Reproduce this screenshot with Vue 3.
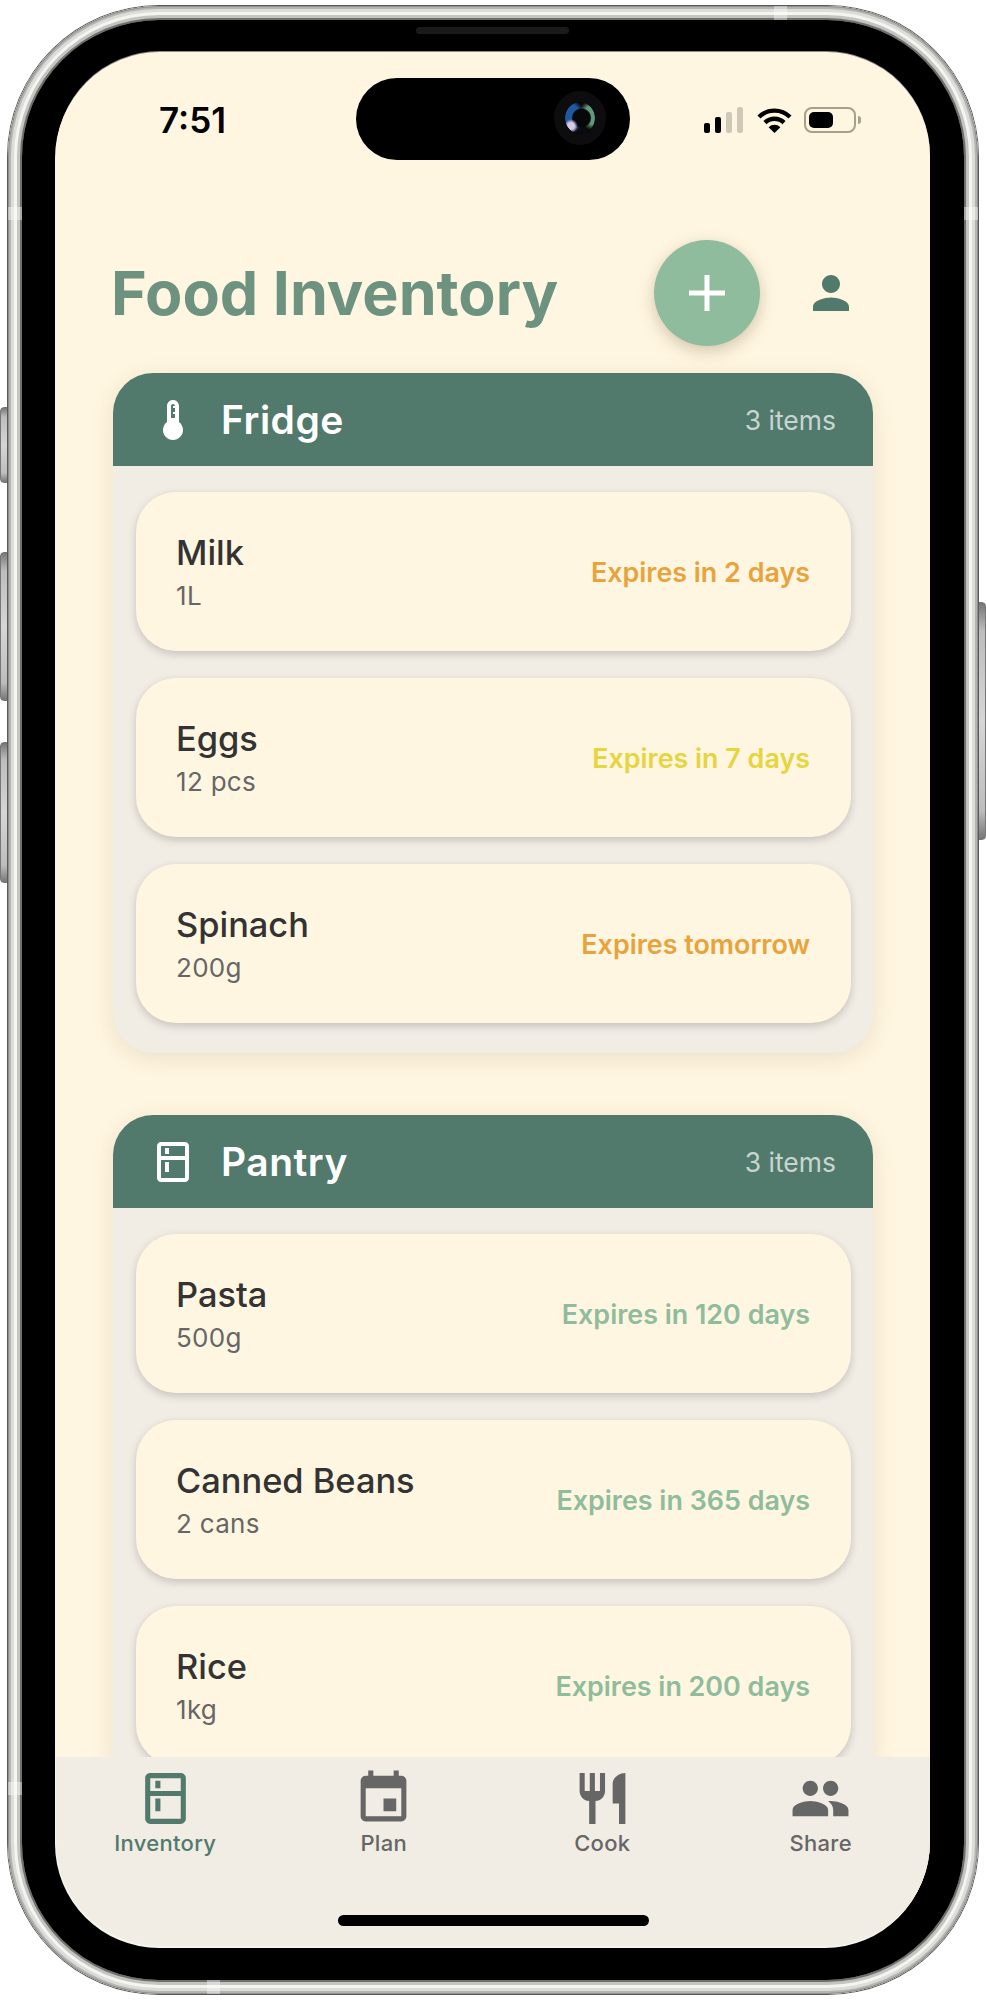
<script setup>
const sections = [
  {
    name: 'Fridge',
    icon: 'thermo',
    items: [
      { name: 'Milk', qty: '1L', expiry: 'Expires in 2 days', level: 'soon' },
      { name: 'Eggs', qty: '12 pcs', expiry: 'Expires in 7 days', level: 'mid' },
      { name: 'Spinach', qty: '200g', expiry: 'Expires tomorrow', level: 'soon' },
    ],
  },
  {
    name: 'Pantry',
    icon: 'kitchen',
    items: [
      { name: 'Pasta', qty: '500g', expiry: 'Expires in 120 days', level: 'ok' },
      { name: 'Canned Beans', qty: '2 cans', expiry: 'Expires in 365 days', level: 'ok' },
      { name: 'Rice', qty: '1kg', expiry: 'Expires in 200 days', level: 'ok' },
    ],
  },
]

const kitchen = 'M18 2.01L6 2c-1.1 0-2 .89-2 2v16c0 1.1.9 2 2 2h12c1.1 0 2-.9 2-2V4c0-1.11-.9-1.99-2-1.99zM18 20H6v-9.02h12V20zm0-11H6V4h12v5zM8 5h2v3H8zm0 7h2v5H8z'
const thermo = 'M15 13V5c0-1.66-1.34-3-3-3S9 3.34 9 5v8c-1.21.91-2 2.37-2 4 0 2.76 2.24 5 5 5s5-2.24 5-5c0-1.63-.79-3.09-2-4zm-4-8c0-.55.45-1 1-1s1 .45 1 1h-1v1h1v2h-1v1h1v2h-2V5z'

const tabs = [
  { label: 'Inventory', active: true, d: kitchen },
  { label: 'Plan', d: 'M17 12h-5v5h5v-5zM16 1v2H8V1H6v2H5c-1.11 0-1.99.9-1.99 2L3 19c0 1.1.89 2 2 2h14c1.1 0 2-.9 2-2V5c0-1.1-.9-2-2-2h-1V1h-2zm3 18H5V8h14v11z' },
  { label: 'Cook', d: 'M11 9H9V2H7v7H5V2H3v7c0 2.12 1.66 3.84 3.75 3.97V22h2.5v-9.03C11.34 12.84 13 11.12 13 9V2h-2v7zm5-3v8h2.5v8H21V2c-2.76 0-5 2.24-5 4z' },
  { label: 'Share', d: 'M16 11c1.66 0 2.99-1.34 2.99-3S17.66 5 16 5c-1.66 0-3 1.34-3 3s1.34 3 3 3zm-8 0c1.66 0 2.99-1.34 2.99-3S9.66 5 8 5C6.34 5 5 6.34 5 8s1.34 3 3 3zm0 2c-2.33 0-7 1.17-7 3.5V19h14v-2.5c0-2.33-4.67-3.5-7-3.5zm8 0c-.29 0-.62.02-.97.05 1.16.84 1.97 1.97 1.97 3.45V19h6v-2.5c0-2.33-4.67-3.5-7-3.5z' },
]
</script>

<template>
  <div class="page">
    <i class="side-btn left b1"></i>
    <i class="side-btn left b2"></i>
    <i class="side-btn left b3"></i>
    <i class="side-btn right b4"></i>

    <div class="frame">
      <div class="ring">
        <i class="band h top"></i>
        <i class="band h bottom"></i>
        <i class="band v l1"></i>
        <i class="band v l2"></i>
        <i class="band v r1"></i>
        <div class="bezel">
          <i class="speaker"></i>
          <div class="screen">
            <div class="island"><i class="lens"></i></div>

            <div class="status">
              <span class="time">7:51</span>
              <div class="status-icons">
                <div class="signal"><i></i><i></i><i class="off"></i><i class="off"></i></div>
                <svg class="wifi" width="35" height="26" viewBox="0 0 35 26">
                  <path d="M2 10A22 22 0 0 1 33 10" fill="none" stroke="#000" stroke-width="4.4" />
                  <path d="M8 15.6A13.5 13.5 0 0 1 27 15.6" fill="none" stroke="#000" stroke-width="4.4" />
                  <path d="M17.5 26L11.6 20.2A8.4 8.4 0 0 1 23.4 20.2Z" />
                </svg>
                <div class="battery"><i></i></div>
              </div>
            </div>

            <div class="body">
              <div class="header">
                <h1>Food Inventory</h1>
                <button class="add">
                  <svg width="36" height="36" viewBox="0 0 36 36"><path d="M18 0v36M0 18h36" stroke="#fff" stroke-width="5" /></svg>
                </button>
                <svg class="profile" width="54" height="54" viewBox="0 0 24 24">
                  <path d="M12 12c2.21 0 4-1.79 4-4s-1.79-4-4-4-4 1.79-4 4 1.79 4 4 4zm0 2c-2.67 0-8 1.34-8 4v2h16v-2c0-2.66-5.33-4-8-4z" />
                </svg>
              </div>

              <section v-for="s in sections" :key="s.name" class="section">
                <div class="section-head">
                  <svg class="section-icon" width="54" height="48" viewBox="-1.5 0 27 24">
                    <path :d="s.icon === 'thermo' ? thermo : kitchen" />
                  </svg>
                  <h2>{{ s.name }}</h2>
                  <span class="count">{{ s.items.length }} items</span>
                </div>
                <div class="items">
                  <div v-for="item in s.items" :key="item.name" class="item">
                    <div>
                      <div class="item-name">{{ item.name }}</div>
                      <div class="item-qty">{{ item.qty }}</div>
                    </div>
                    <span class="expiry" :class="item.level">{{ item.expiry }}</span>
                  </div>
                </div>
              </section>
            </div>

            <nav class="tabs">
              <div v-for="t in tabs" :key="t.label" class="tab" :class="{ active: t.active }">
                <svg width="61" height="61" viewBox="0 0 24 24"><path :d="t.d" /></svg>
                <span>{{ t.label }}</span>
              </div>
              <i class="home"></i>
            </nav>
          </div>
        </div>
      </div>
    </div>
  </div>
</template>

<style>
html, body { background: #fff; }
</style>

<style scoped>
.page {
  position: relative;
  width: 986px;
  height: 2000px;
  padding: 5px 7px;
  box-sizing: border-box;
  font-family: Inter, "Liberation Sans", sans-serif;
  overflow: hidden;
}
.side-btn {
  position: absolute;
  width: 10px;
  background: linear-gradient(180deg, #777 0, #bdbdbd 12%, #d6d6d6 50%, #bdbdbd 88%, #777 100%);
  border: 1px solid #77777a;
  box-sizing: border-box;
}
.side-btn.left { left: 0; border-radius: 4px 0 0 4px; }
.side-btn.right { right: 0; border-radius: 0 4px 4px 0; }
.b1 { top: 407px; height: 76px; }
.b2 { top: 552px; height: 149px; }
.b3 { top: 742px; height: 141px; }
.b4 { top: 602px; height: 238px; }

.frame {
  position: relative;
  height: 1990px;
  padding: 1px;
  border-radius: 152px;
  background: #5a5a5a;
  box-sizing: border-box;
}
.ring {
  position: relative;
  height: 100%;
  padding: 14px;
  border-radius: 151px;
  background: #cfcfcb;
  box-shadow: inset 0 0 0 1px #8e8e8b, inset 0 0 0 3px #b4b4b0, inset 0 0 0 6px #dcdcd8, inset 0 0 0 9px #f4f4f1, inset 0 0 0 12px #c4c4c0, inset 0 0 0 14px #6f6f6c;
  box-sizing: border-box;
}
.band {
  position: absolute;
  background: rgba(255, 255, 255, 0.4);
}
.band.h { width: 13px; height: 14px; }
.band.v { width: 14px; height: 13px; }
.band.top { top: 0; left: 766px; }
.band.bottom { bottom: 0; left: 199px; }
.band.l1 { left: 0; top: 201px; }
.band.l2 { left: 0; top: 1776px; }
.band.r1 { right: 0; top: 201px; }

.bezel {
  position: relative;
  height: 100%;
  padding: 32px 34px 34px;
  border-radius: 137px;
  background: #000;
  box-sizing: border-box;
}
.speaker {
  position: absolute;
  top: 7px;
  left: 394px;
  width: 153px;
  height: 7px;
  border-radius: 4px;
  background: #1a1a1a;
}
.screen {
  position: relative;
  display: flex;
  flex-direction: column;
  height: 100%;
  border-radius: 104px;
  background: #fff6e1;
  overflow: hidden;
  box-shadow: -1px 2px 0 #f4f4f0, 0 -1px 0 #8a8a8a;
}
.island {
  position: absolute;
  z-index: 3;
  top: 26px;
  left: 300px;
  width: 274px;
  height: 82px;
  border-radius: 41px;
  background: #000;
}
.lens {
  position: absolute;
  top: 13px;
  left: 198px;
  width: 30px;
  height: 32px;
  border: 11px solid #0d0d0f;
  border-radius: 50%;
  background:
    radial-gradient(circle at 20% 75%, #d8cce0 0 10%, transparent 20%),
    radial-gradient(circle at 55% 50%, #08080a 0 38%, transparent 44%),
    radial-gradient(circle at 6% 45%, #1f5aa0 0 40%, transparent 54%),
    radial-gradient(circle at 96% 40%, #5f9a7c 0 28%, transparent 44%),
    #0b0b0d;
  background-clip: padding-box;
}

.status {
  display: flex;
  justify-content: space-between;
  align-items: center;
  flex: none;
  height: 58px;
  margin-top: 39px;
  padding: 0 69px 0 103px;
}
.time {
  font-size: 35px;
  font-weight: 600;
  color: #000;
}
.status-icons {
  display: flex;
  align-items: flex-end;
  gap: 12px;
}
.signal {
  display: flex;
  align-items: flex-end;
  gap: 5px;
  height: 26px;
  margin-right: 2px;
}
.signal i {
  width: 6px;
  border-radius: 2px;
  background: #000;
}
.signal i:nth-child(1) { height: 10px; }
.signal i:nth-child(2) { height: 16px; }
.signal i:nth-child(3) { height: 21px; }
.signal i:nth-child(4) { height: 26px; }
.signal i.off { background: #cfc8b8; }
.wifi { display: block; }
.battery {
  position: relative;
  width: 52px;
  height: 26px;
  padding: 3px;
  border: 2px solid #a89f8a;
  border-radius: 8px;
  box-sizing: border-box;
  margin-right: 5px;
}
.battery::after {
  content: "";
  position: absolute;
  top: 7px;
  right: -7px;
  width: 3px;
  height: 8px;
  border-radius: 0 3px 3px 0;
  background: #a89f8a;
}
.battery i {
  display: block;
  width: 24px;
  height: 16px;
  border-radius: 5px;
  background: #000;
}

.body {
  flex: 1;
  min-height: 0;
  overflow: hidden;
}
.header {
  display: flex;
  align-items: center;
  height: 106px;
  margin: 91px 72px 27px 55px;
}
h1 {
  flex: 1;
  margin: 0;
  font-size: 61px;
  font-weight: 700;
  color: #6e9280;
  white-space: nowrap;
}
.add {
  display: flex;
  align-items: center;
  justify-content: center;
  width: 106px;
  height: 106px;
  padding: 0;
  border: 0;
  border-radius: 50%;
  background: #8fbc9c;
  box-shadow: 0 5px 16px rgba(90, 70, 40, 0.28);
}
.profile {
  margin-left: 44px;
  fill: #527a6c;
}

.section {
  margin: 0 57px 62px;
  border-radius: 40px;
  background: #f1ece4;
  box-shadow: 0 5px 22px rgba(120, 95, 50, 0.14);
}
.section-head {
  display: flex;
  align-items: center;
  height: 93px;
  padding: 0 37px 0 33px;
  border-radius: 40px 40px 0 0;
  background: #527a6c;
  color: #fff;
}
.section-icon {
  fill: #fff;
  margin-right: 21px;
}
h2 {
  flex: 1;
  margin: 0;
  font-size: 39px;
  font-weight: 600;
  letter-spacing: 0.5px;
}
.count {
  font-size: 26.5px;
  color: rgba(255, 255, 255, 0.7);
}
.items {
  display: flex;
  flex-direction: column;
  gap: 27px;
  padding: 26px 22px 30px 23px;
}
.item {
  display: flex;
  justify-content: space-between;
  align-items: center;
  height: 159px;
  padding: 0 41px 0 40px;
  border-radius: 40px;
  background: #fff6e1;
  box-shadow: 0 3px 9px rgba(0, 0, 0, 0.18);
  box-sizing: border-box;
}
.item-name {
  font-size: 34.4px;
  font-weight: 550;
  line-height: 42px;
  color: #333;
}
.item-qty {
  margin-top: 6px;
  font-size: 26px;
  line-height: 32px;
  letter-spacing: 0.3px;
  color: #666;
}
.expiry {
  font-size: 26.9px;
  font-weight: 600;
}
.expiry.soon { color: #e8a33d; }
.expiry.mid { color: #e6d53f; }
.expiry.ok { color: #8fbc9c; }

.tabs {
  position: relative;
  display: grid;
  grid-template-columns: repeat(4, 1fr);
  flex: none;
  height: 189px;
  padding-top: 11px;
  background: #f1ece4;
  box-sizing: border-box;
}
.tab {
  display: flex;
  flex-direction: column;
  align-items: center;
  gap: 1px;
  color: #666;
  fill: #666;
  font-size: 22px;
  line-height: 26px;
  letter-spacing: 0.3px;
  font-weight: 500;
}
.tab.active {
  color: #527a6c;
  fill: #527a6c;
}
.home {
  position: absolute;
  left: 282px;
  bottom: 20px;
  width: 311px;
  height: 11px;
  border-radius: 6px;
  background: #000;
}
</style>
